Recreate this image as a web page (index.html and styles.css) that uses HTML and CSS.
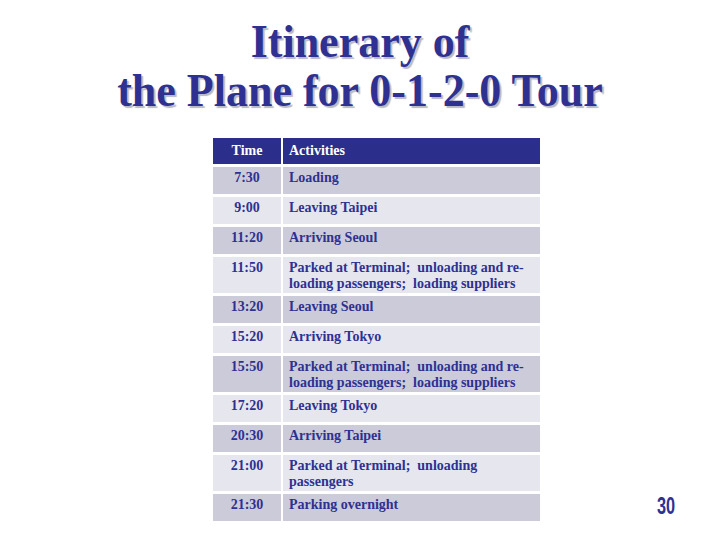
FILE: index.html
```html
<!DOCTYPE html>
<html>
<head>
<meta charset="utf-8">
<link rel="stylesheet" href="styles.css">
</head>
<body>
<div class="slide">
  <h1 class="title">
    <span class="line">Itinerary of</span>
    <span class="line">the Plane for 0-1-2-0 Tour</span>
  </h1>
  <table class="itin">
    <thead>
      <tr><th class="time">Time</th><th class="act">Activities</th></tr>
    </thead>
    <tbody>
      <tr class="odd"><td class="time">7:30</td><td class="act">Loading</td></tr>
      <tr class="even"><td class="time">9:00</td><td class="act">Leaving Taipei</td></tr>
      <tr class="odd"><td class="time">11:20</td><td class="act">Arriving Seoul</td></tr>
      <tr class="even"><td class="time">11:50</td><td class="act">Parked at Terminal;&nbsp; unloading and re-<br>loading passengers;&nbsp; loading suppliers</td></tr>
      <tr class="odd"><td class="time">13:20</td><td class="act">Leaving Seoul</td></tr>
      <tr class="even"><td class="time">15:20</td><td class="act">Arriving Tokyo</td></tr>
      <tr class="odd"><td class="time">15:50</td><td class="act">Parked at Terminal;&nbsp; unloading and re-<br>loading passengers;&nbsp; loading suppliers</td></tr>
      <tr class="even"><td class="time">17:20</td><td class="act">Leaving Tokyo</td></tr>
      <tr class="odd"><td class="time">20:30</td><td class="act">Arriving Taipei</td></tr>
      <tr class="even"><td class="time">21:00</td><td class="act">Parked at Terminal;&nbsp; unloading<br>passengers</td></tr>
      <tr class="odd"><td class="time">21:30</td><td class="act">Parking overnight</td></tr>
    </tbody>
  </table>
  <div class="pagenum">30</div>
</div>
</body>
</html>
```

FILE: styles.css
```css
html, body {
  margin: 0;
  padding: 0;
  background: #ffffff;
}
.slide {
  width: 720px;
  height: 540px;
  position: relative;
  overflow: hidden;
  font-family: "Liberation Serif", "Times New Roman", serif;
}
.title {
  margin: 0;
  padding-top: 18px;
  height: 117px;
  text-align: center;
  font-weight: bold;
  font-size: 44px;
  color: #2e3192;
  text-shadow: 2px 2px 1px #b8b8c6;
}
.title .line {
  display: block;
  height: 49px;
  line-height: 49px;
  transform: scaleY(1.07);
  transform-origin: center 39px;
}
.itin {
  margin-left: 211px;
  border-collapse: separate;
  border-spacing: 2px 3px;
  font-size: 14px;
  font-weight: bold;
  line-height: 16px;
  color: #2e3192;
}
.itin th, .itin td {
  vertical-align: top;
  padding: 3px 6px 1px 6px;
  text-align: left;
}
.itin th {
  background: #2c2e8b;
  color: #ffffff;
  height: 21px;
  padding-top: 5px;
  padding-bottom: 0;
}
.itin td {
  height: 23px;
}
.itin .time {
  width: 56px;
  text-align: center;
}
.itin .act {
  width: 245px;
}
.itin .odd td { background: #cbcbd9; }
.itin .even td { background: #e6e6ee; }
.pagenum {
  position: absolute;
  left: 657px;
  top: 492px;
  font-family: "Liberation Sans", Arial, sans-serif;
  font-weight: bold;
  font-size: 24px;
  color: #2e3192;
  transform: scaleX(0.68);
  transform-origin: left top;
}
```
